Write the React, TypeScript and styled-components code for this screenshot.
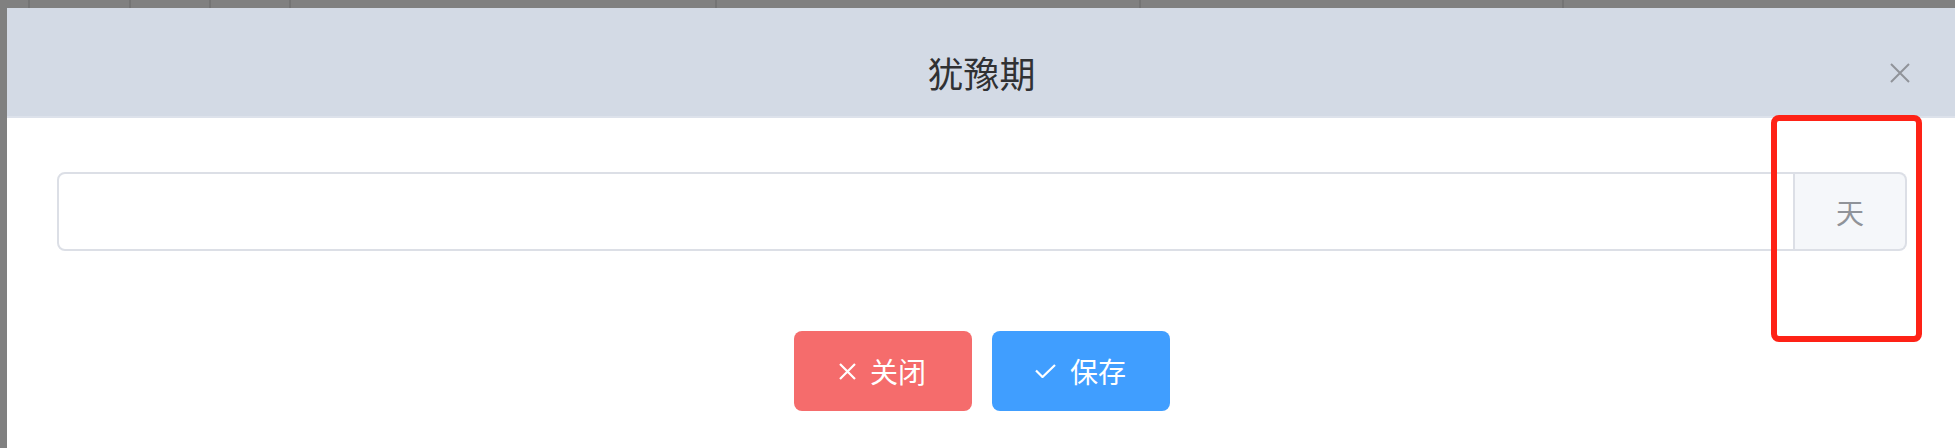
import React from 'react';
import styled, { createGlobalStyle } from 'styled-components';

const GlobalStyle = createGlobalStyle`
  html, body {
    margin: 0;
    padding: 0;
    background: #808080;
  }
  * {
    box-sizing: border-box;
  }
`;

const Page = styled.div`
  position: relative;
  width: 1955px;
  height: 448px;
  overflow: hidden;
  background: #808080;
  font-family: "Noto Sans CJK SC", "Noto Sans", sans-serif;
`;

const BgStrip = styled.div`
  display: flex;
  height: 8px;
`;

const BgCell = styled.div<{ $w: number }>`
  flex: 0 0 ${(p) => p.$w}px;
  border-right: 2px solid #747474;
`;

const Dialog = styled.div`
  margin-left: 7px;
  width: 1949px;
  background: #fff;
`;

const Header = styled.div`
  position: relative;
  padding: 40px 40px 20px;
  background: #d3dae5;
  border-bottom: 2px solid #dde2eb;
  text-align: center;
`;

const Title = styled.span`
  font-size: 36px;
  line-height: 48px;
  color: #303133;
`;

const CloseBtn = styled.button`
  position: absolute;
  right: 44px;
  top: 53px;
  width: 24px;
  height: 24px;
  padding: 0;
  border: 0;
  background: transparent;
  display: flex;
  align-items: center;
  justify-content: center;
`;

const Body = styled.div`
  padding: 54px 49px 37px 50px;
  display: flex;
  flex-direction: column;
  align-items: stretch;
  gap: 80px;
`;

const InputGroup = styled.div`
  display: flex;
  height: 79px;
`;

const Input = styled.input`
  flex: 1;
  border: 2px solid #dcdfe6;
  border-radius: 8px 0 0 8px;
  outline: none;
  font-size: 28px;
  padding: 0 30px;
  font-family: inherit;
`;

const Append = styled.div`
  flex: 0 0 112px;
  display: flex;
  align-items: center;
  justify-content: center;
  background: #f5f7fa;
  color: #909399;
  font-size: 28px;
  border: 2px solid #dcdfe6;
  border-left: 0;
  border-radius: 0 8px 8px 0;
`;

const Footer = styled.div`
  display: flex;
  justify-content: center;
  gap: 20px;
  padding-right: 1px;
`;

const Button = styled.button<{ $kind: 'danger' | 'primary' }>`
  width: 178px;
  height: 80px;
  border: 0;
  border-radius: 8px;
  background: ${(p) => (p.$kind === 'danger' ? '#f56c6c' : '#409eff')};
  color: #fff;
  font-size: 28px;
  font-family: inherit;
  display: flex;
  align-items: center;
  justify-content: center;
  gap: 14px;
`;

const Annotation = styled.div`
  position: absolute;
  left: 1771px;
  top: 115px;
  width: 151px;
  height: 227px;
  border: 6px solid #fe2216;
  border-radius: 8px;
  pointer-events: none;
`;

const bgCells = [30, 101, 80, 80, 426, 424, 423, 400];

const App: React.FC = () => (
  <>
    <GlobalStyle />
    <Page>
      <BgStrip>
        {bgCells.map((w, i) => (
          <BgCell key={i} $w={w} />
        ))}
      </BgStrip>
      <Dialog>
        <Header>
          <Title>犹豫期</Title>
          <CloseBtn aria-label="close">
            <svg width="20" height="20" viewBox="0 0 20 20">
              <path d="M1 1L19 19M19 1L1 19" stroke="#909399" strokeWidth="2" fill="none" />
            </svg>
          </CloseBtn>
        </Header>
        <Body>
          <InputGroup>
            <Input />
            <Append>天</Append>
          </InputGroup>
          <Footer>
            <Button $kind="danger">
              <svg width="17" height="17" viewBox="0 0 17 17">
                <path d="M1 1L16 16M16 1L1 16" stroke="#fff" strokeWidth="2.2" fill="none" />
              </svg>
              <span>关闭</span>
            </Button>
            <Button $kind="primary">
              <svg width="21" height="14" viewBox="0 0 21 14">
                <path d="M1 6.5L7.5 13L20 1" stroke="#fff" strokeWidth="2.2" fill="none" />
              </svg>
              <span>保存</span>
            </Button>
          </Footer>
        </Body>
      </Dialog>
      <Annotation />
    </Page>
  </>
);

export default App;
